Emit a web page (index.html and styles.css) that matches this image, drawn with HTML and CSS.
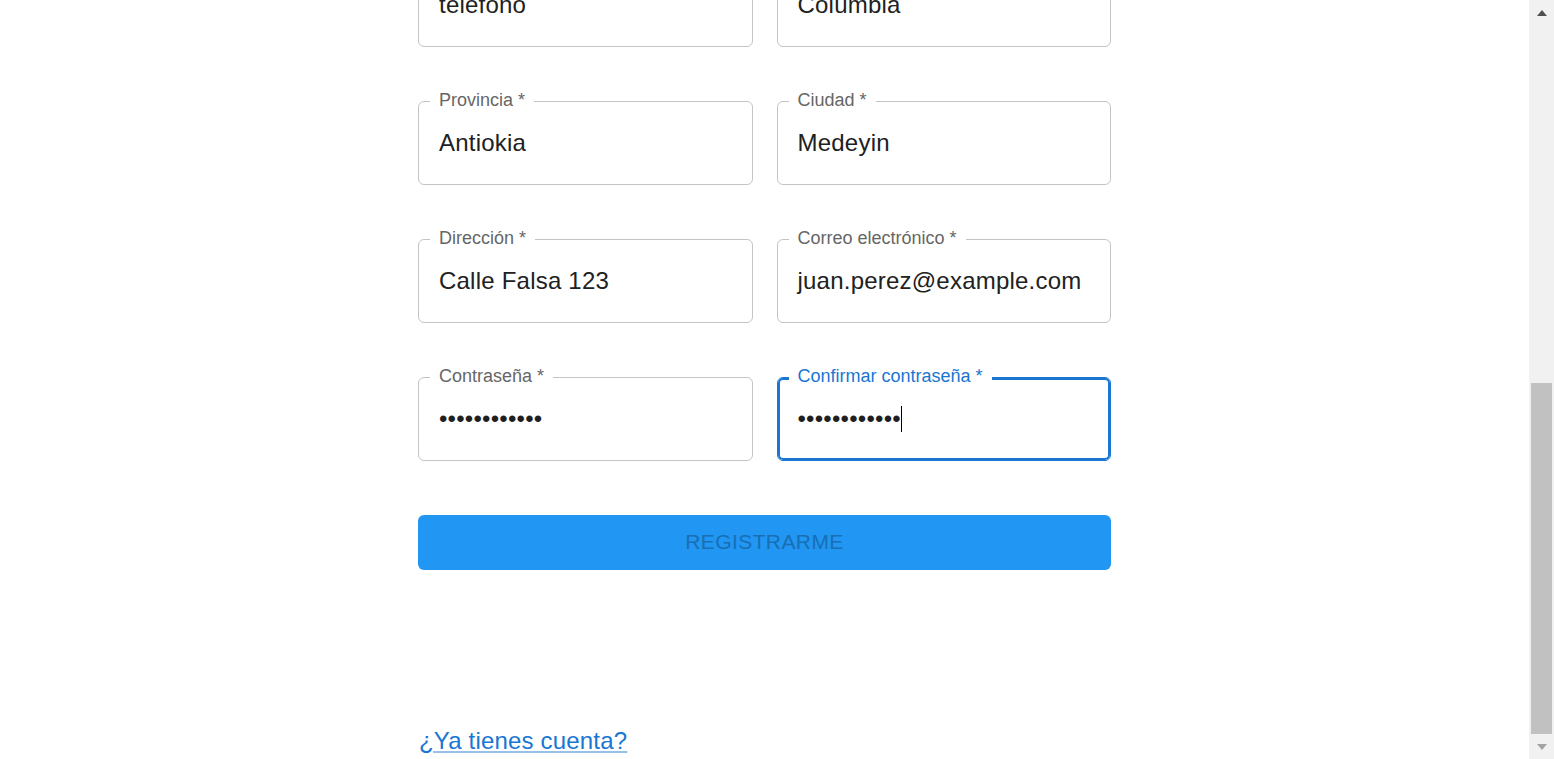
FILE: index.html
```html
<!DOCTYPE html>
<html lang="es">
<head>
<meta charset="utf-8">
<title>Registro</title>
<link rel="stylesheet" href="styles.css">
</head>
<body>
<div class="screen">
  <main class="viewport">
    <form class="form">
      <div class="grid">
        <div class="field"><div class="value">telefono</div></div>
        <div class="field"><div class="value">Columbia</div></div>
        <div class="field"><span class="label">Provincia *</span><div class="value">Antiokia</div></div>
        <div class="field"><span class="label">Ciudad *</span><div class="value">Medeyin</div></div>
        <div class="field"><span class="label">Dirección *</span><div class="value">Calle Falsa 123</div></div>
        <div class="field"><span class="label">Correo electrónico *</span><div class="value">juan.perez@example.com</div></div>
        <div class="field"><span class="label">Contraseña *</span><div class="value dots">••••••••••••</div></div>
        <div class="field focused"><span class="label">Confirmar contraseña *</span><div class="value dots">••••••••••••<span class="caret"></span></div></div>
      </div>
      <button type="button" class="submit">REGISTRARME</button>
      <a class="login-link" href="#">¿Ya tienes cuenta?</a>
    </form>
  </main>
  <div class="scrollbar">
    <div class="sb-btn"><span class="arrow-up"></span></div>
    <div class="sb-track"><div class="sb-thumb"></div></div>
    <div class="sb-btn"><span class="arrow-down"></span></div>
  </div>
</div>
</body>
</html>
```

FILE: styles.css
```css
html, body {
  margin: 0;
  padding: 0;
  background: #fff;
}

body {
  font-family: "Liberation Sans", Arial, sans-serif;
}

.screen {
  display: flex;
  height: 759px;
  overflow: hidden;
}

.viewport {
  flex: 1;
  overflow: hidden;
}

.form {
  width: 693px;
  margin: -37px auto 0;
  display: flex;
  flex-direction: column;
}

.grid {
  display: grid;
  grid-template-columns: 1fr 1fr;
  gap: 54px 24px;
}

.field {
  position: relative;
  box-sizing: border-box;
  height: 84px;
  border: 1px solid #c4c4c4;
  border-radius: 6px;
  padding: 0 20px;
  display: flex;
  align-items: center;
}

.field.focused {
  border-color: #1976d2;
  box-shadow: inset 0 0 0 2px #1976d2;
}

.label {
  position: absolute;
  left: 11px;
  top: -11px;
  padding: 0 9px;
  background: #fff;
  font-size: 18px;
  line-height: 18px;
  color: #666666;
  white-space: nowrap;
}

.focused .label {
  color: #1976d2;
}

.value {
  font-size: 24px;
  line-height: 34.5px;
  letter-spacing: 0.22px;
  color: #212121;
  white-space: nowrap;
  display: flex;
  align-items: center;
}

.dots {
  color: #1f1f1f;
}

.caret {
  display: inline-block;
  width: 1px;
  height: 26px;
  background: #000;
}

.submit {
  margin-top: 54px;
  height: 55px;
  border: none;
  border-radius: 6px;
  background: #2196f3;
  color: #186fb4;
  font-family: "Liberation Sans", Arial, sans-serif;
  font-size: 21px;
  letter-spacing: 0.4px;
  padding: 0 0 2px;
  cursor: default;
}

.login-link {
  align-self: flex-start;
  margin-top: 153px;
  margin-left: 1px;
  font-size: 24px;
  line-height: 36px;
  letter-spacing: 0.18px;
  color: #1976d2;
  text-decoration: underline;
  text-decoration-color: rgba(25, 118, 210, 0.45);
  text-underline-offset: 2px;
}

.scrollbar {
  width: 25px;
  flex: none;
  background: #f1f1f1;
  display: flex;
  flex-direction: column;
}

.sb-btn {
  height: 25px;
  display: flex;
  align-items: center;
  justify-content: center;
}

.arrow-up {
  width: 0;
  height: 0;
  border-left: 5.5px solid transparent;
  border-right: 5.5px solid transparent;
  border-bottom: 6px solid #505050;
}

.arrow-down {
  width: 0;
  height: 0;
  border-left: 5.5px solid transparent;
  border-right: 5.5px solid transparent;
  border-top: 6px solid #a3a3a3;
}

.sb-track {
  flex: 1;
  display: flex;
  flex-direction: column;
  justify-content: flex-end;
}

.sb-thumb {
  height: 351px;
  margin: 0 2px;
  background: #c1c1c1;
}
```
